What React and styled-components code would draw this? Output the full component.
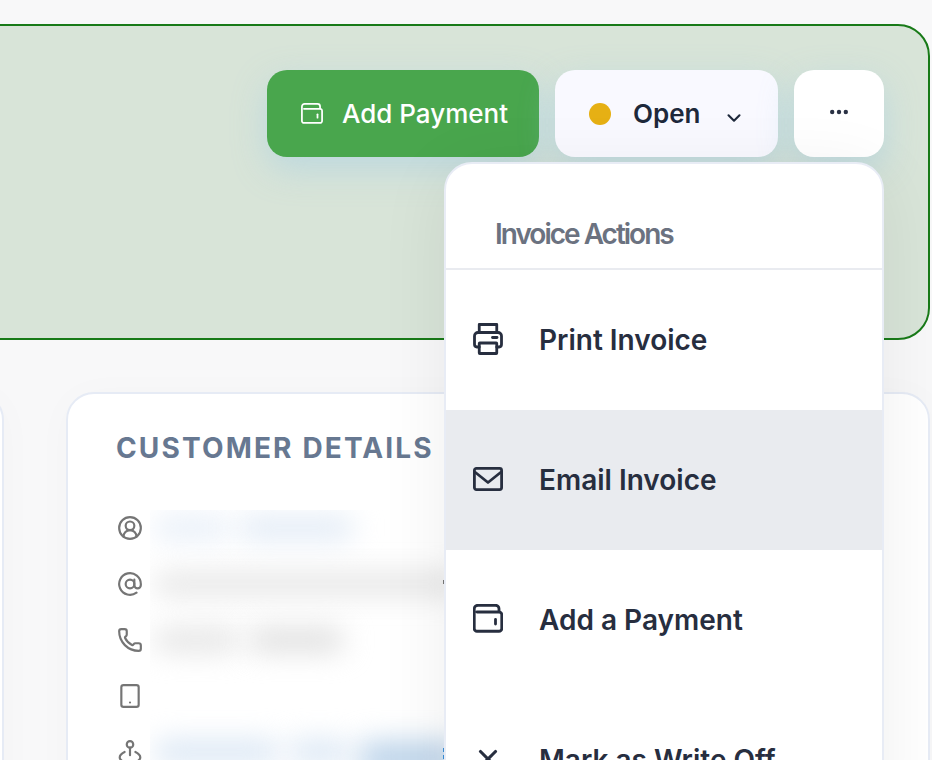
import React from 'react'
import styled, { createGlobalStyle } from 'styled-components'
import { AtSign, ChevronDown, CircleUserRound, Phone, Tablet, X } from 'lucide-react'

const GlobalStyle = createGlobalStyle`
    html, body {
        margin:0;
        background-color:#f8f8f9;
        font-family:Inter, "Liberation Sans", sans-serif;
    }
    * { box-sizing:border-box; }
`

const Page = styled.div`
    height:100vh;
    overflow:hidden;
    padding-top:24px;
`

const Banner = styled.section`
    width:962px;
    height:316px;
    margin-left:-32px;
    padding:44px 44px 0 0;
    background-color:#d8e4d8;
    border:2px solid #187a18;
    border-radius:32px;
`

const ActionRow = styled.div`
    display:flex;
    justify-content:flex-end;
    gap:16px;
`

const ActionButton = styled.button`
    display:flex;
    align-items:center;
    height:87px;
    border:none;
    border-radius:20px;
    font-family:inherit;
    font-size:26px;
    box-shadow:0 12px 34px rgba(150, 200, 230, 0.42);
`

const PaymentButton = styled(ActionButton)`
    width:272px;
    padding:0 0 0 34px;
    gap:19px;
    color:#fff;
    font-weight:500;
    background-color:#49a64d;
`

const StatusButton = styled(ActionButton)`
    width:223px;
    padding:0 0 0 34px;
    color:#1e293b;
    font-weight:600;
    background-color:#f9f9ff;
`

const StatusDot = styled.span`
    width:22px;
    height:22px;
    margin-right:22px;
    border-radius:50%;
    background-color:#e6b014;
`

const StatusCaret = styled(ChevronDown)`
    margin:8px 0 0 22px;
`

const MoreWrap = styled.div`
    position:relative;
`

const MoreButton = styled(ActionButton)`
    justify-content:center;
    width:90px;
    padding:0 0 4px;
    background-color:#fff;
`

const Menu = styled.div`
    position:absolute;
    z-index:2;
    top:calc(100% + 5px);
    right:0;
    width:440px;
    overflow:hidden;
    background-color:#fff;
    border:2px solid #e8ecf5;
    border-radius:28px;
    box-shadow:0 10px 70px rgba(0, 0, 0, 0.07);
`

const MenuTitle = styled.div`
    display:flex;
    align-items:center;
    height:106px;
    padding:36px 0 0 49px;
    color:#6b7280;
    font-size:28px;
    font-weight:600;
    letter-spacing:-2px;
    border-bottom:2px solid #e9ebf0;
`

const MenuItem = styled.div`
    display:flex;
    align-items:center;
    height:140px;
    padding-left:27px;
    gap:36px;
    color:#272e3f;
    font-size:28px;
    font-weight:600;
    background-color:${({ $active }) => ($active ? '#e9ebef' : 'transparent')};
`

const MenuIcon = styled.span`
    display:flex;
    justify-content:center;
    width:30px;
    margin-bottom:3px;
    color:#272e3f;
`

const CardRow = styled.div`
    display:flex;
    gap:62px;
    margin:52px 2px 0 -296px;
`

const Card = styled.section`
    flex:${({ $grow }) => ($grow ? 1 : '0 0 300px')};
    height:600px;
    padding:32px 47px;
    background-color:#fff;
    border:2px solid #e6ebf5;
    border-radius:28px;
    box-shadow:0 4px 40px rgba(0, 0, 0, 0.025);
`

const CardTitle = styled.h2`
    margin:0 0 40px 1px;
    color:#677891;
    font-size:28px;
    line-height:44px;
    font-weight:700;
    letter-spacing:2.15px;
    white-space:nowrap;
`

const Details = styled.div`
    display:flex;
    gap:7px;
`

const DetailIcons = styled.div`
    display:flex;
    flex-direction:column;
    align-items:center;
    gap:30px;
    width:28px;
    padding:5px 0 0 2px;
    color:#757575;
`

const BlurPanel = styled.div`
    position:relative;
    flex:1;
    height:300px;
    padding:7px 0 0 4px;
    overflow:hidden;
    background-color:#fff;
`

const BlurLine = styled.div`
    display:flex;
    gap:10px;
    height:22px;
    margin-bottom:34px;
`

const BlurSegment = styled.div`
    width:${({ $width }) => $width}px;
    flex-shrink:0;
    height:${({ $tall }) => ($tall ? 36 : 22)}px;
    border-radius:11px;
    background-color:${({ $color }) => $color};
    filter:blur(14px);
`

// Unblurred scraps of text that peek out beside the open menu
const TextScrap = styled.span`
    position:absolute;
    left:293px;
    top:${({ $top }) => $top}px;
    width:2px;
    height:4px;
    background-color:${({ $color }) => $color};
`

const WalletIcon = ({ size, weight }) => (
    <svg width={size} height={size} viewBox="0 0 30 30" fill="none" stroke="currentColor" strokeWidth={weight} strokeLinecap="round" strokeLinejoin="round">
        <path d="M4 8H26A2.75 2.75 0 0 1 28.75 10.75V24.5A2.75 2.75 0 0 1 26 27.25H4A2.75 2.75 0 0 1 1.25 24.5V5A3.75 3.75 0 0 1 5 1.25H22.5A3.5 3.5 0 0 1 26 4.75V8" />
        <path d="M22.5 15.5V20" />
    </svg>
)

const PrinterIcon = () => (
    <svg width="30" height="32" viewBox="0 0 30 32" fill="none" stroke="currentColor" strokeWidth="2.8" strokeLinecap="round" strokeLinejoin="round">
        <path d="M6.25 9.5V1.5H23.75V9.5" />
        <path d="M6.25 24H4A2.75 2.75 0 0 1 1.5 21.25V13A3.5 3.5 0 0 1 5 9.5H25A3.5 3.5 0 0 1 28.5 13V21.25A2.75 2.75 0 0 1 26 24H23.75" />
        <rect x="6.25" y="20" width="17.5" height="10.5" rx="0.5" />
        <path d="M19.5 14.5H24" />
    </svg>
)

const MailIcon = () => (
    <svg width="30" height="24" viewBox="0 0 30 24" fill="none" stroke="currentColor" strokeWidth="2.8" strokeLinecap="round" strokeLinejoin="round">
        <rect x="1.4" y="1.4" width="27.2" height="21.2" rx="2" />
        <path d="M2.5 5.5L15 15.5L27.5 5.5" />
    </svg>
)

const DotsIcon = () => (
    <svg width="18" height="6" viewBox="0 0 18 6" fill="#2b3245">
        <circle cx="2.2" cy="3" r="2.2" />
        <circle cx="9" cy="3" r="2.2" />
        <circle cx="15.8" cy="3" r="2.2" />
    </svg>
)

const AddressIcon = () => (
    <svg width="26" height="26" viewBox="0 0 24 24" fill="none" stroke="currentColor" strokeWidth="2" strokeLinecap="round" strokeLinejoin="round">
        <circle cx="12" cy="5" r="3" />
        <path d="M12 8V15" />
        <path d="M7 12C4 13.5 2.5 15 2.5 17C2.5 18.5 4 20 6 21" />
        <path d="M17 12C20 13.5 21.5 15 21.5 17C21.5 18.5 20 20 18 21" />
    </svg>
)

const blurLines = [
    [{ width: 75, color: '#e6eef8' }, { width: 115, color: '#dfe9f5' }],
    [{ width: 310, color: '#e4e4e4' }],
    [{ width: 85, color: '#e2e2e2' }, { width: 95, color: '#dcdcdc' }],
    [],
    [{ width: 125, color: '#d6e4f3' }, { width: 60, color: '#d6e4f3' }, { width: 100, color: '#bdd4ea', tall: true }],
]

const menuItems = [
    { label: 'Print Invoice', icon: <PrinterIcon /> },
    { label: 'Email Invoice', icon: <MailIcon />, active: true },
    { label: 'Add a Payment', icon: <WalletIcon size={30} weight={2.8} /> },
    { label: 'Mark as Write Off', icon: <X size={30} strokeWidth={2.5} /> },
]

const App = () => {
    return (
        <Page>
            <GlobalStyle />

            <Banner>
                <ActionRow>
                    <PaymentButton>
                        <WalletIcon size={22} weight={2.4} />
                        Add Payment
                    </PaymentButton>

                    <StatusButton>
                        <StatusDot />
                        Open
                        <StatusCaret size={22} strokeWidth={2.3} />
                    </StatusButton>

                    <MoreWrap>
                        <MoreButton><DotsIcon /></MoreButton>

                        <Menu>
                            <MenuTitle>Invoice Actions</MenuTitle>
                            {
                                menuItems.map((item) => (
                                    <MenuItem key={item.label} $active={item.active}>
                                        <MenuIcon>{item.icon}</MenuIcon>
                                        {item.label}
                                    </MenuItem>
                                ))
                            }
                        </Menu>
                    </MoreWrap>
                </ActionRow>
            </Banner>

            <CardRow>
                <Card />

                <Card $grow>
                    <CardTitle>CUSTOMER DETAILS</CardTitle>

                    <Details>
                        <DetailIcons>
                            <CircleUserRound size={26} strokeWidth={2} />
                            <AtSign size={26} strokeWidth={2} />
                            <Phone size={26} strokeWidth={2} />
                            <Tablet size={26} strokeWidth={2} />
                            <AddressIcon />
                        </DetailIcons>

                        <BlurPanel>
                            {
                                blurLines.map((line, index) => (
                                    <BlurLine key={index}>
                                        {
                                            line.map((segment, i) => <BlurSegment key={i} $width={segment.width} $color={segment.color} $tall={segment.tall} />)
                                        }
                                    </BlurLine>
                                ))
                            }
                            <TextScrap $top={70} $color="#777" />
                            <TextScrap $top={238} $color="#3b8fd6" />
                            <TextScrap $top={245} $color="#3b8fd6" />
                        </BlurPanel>
                    </Details>
                </Card>
            </CardRow>
        </Page>
    )
}

export default App
